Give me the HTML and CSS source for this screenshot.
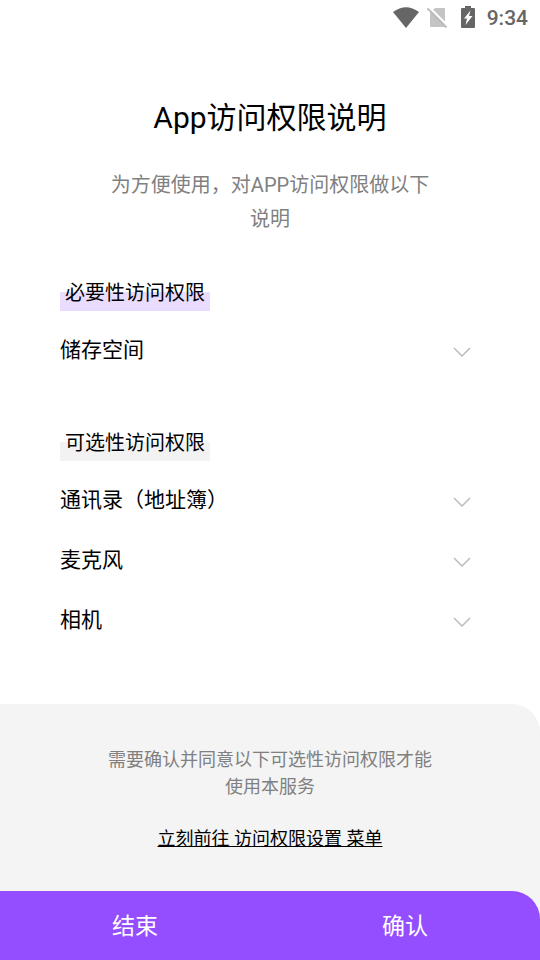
FILE: index.html
```html
<!DOCTYPE html>
<html lang="zh-CN">
<head>
<meta charset="utf-8">
<meta name="viewport" content="width=device-width, initial-scale=1">
<title>App访问权限说明</title>
<link rel="stylesheet" href="styles.css">
</head>
<body>
<div class="status">
  <svg class="wifi" width="26" height="21" viewBox="0 0 26 21" aria-hidden="true"><path d="M0 5Q13-4.500 26 5L13 21z" fill="#666"/></svg>
  <svg class="sim" width="21" height="21" viewBox="0 0 21 21" aria-hidden="true"><path d="M8 1h9q1 0 1 1v17q0 1-1 1H4q-1 0-1-1V6z" fill="#c4c4c4"/><path d="M2 0L22 20" stroke="#fff" stroke-width="2"/><path d="M.5 1.500L19.500 20.500" stroke="#bbb" stroke-width="1.800"/></svg>
  <svg class="battery" width="14" height="22" viewBox="0 0 14 22" aria-hidden="true"><path d="M4 0h6v2h3q1 0 1 1v18q0 1-1 1H1q-1 0-1-1V3q0-1 1-1h3z" fill="#666"/><path d="M9.500 4.500L3 12.500h3L4.500 19 11.500 10H8z" fill="#fff"/></svg>
  <span>9:34</span>
</div>
<main>
  <h1>App访问权限说明</h1>
  <p class="intro">为方便使用，对APP访问权限做以下说明</p>
  <section>
    <h2 class="required">必要性访问权限</h2>
    <button class="row" type="button">储存空间<svg width="18" height="10" viewBox="0 0 18 10" aria-hidden="true"><path d="M1 1l8 8 8-8"/></svg></button>
  </section>
  <section>
    <h2>可选性访问权限</h2>
    <button class="row" type="button">通讯录（地址簿）<svg width="18" height="10" viewBox="0 0 18 10" aria-hidden="true"><path d="M1 1l8 8 8-8"/></svg></button>
    <button class="row" type="button">麦克风<svg width="18" height="10" viewBox="0 0 18 10" aria-hidden="true"><path d="M1 1l8 8 8-8"/></svg></button>
    <button class="row" type="button">相机<svg width="18" height="10" viewBox="0 0 18 10" aria-hidden="true"><path d="M1 1l8 8 8-8"/></svg></button>
  </section>
</main>
<footer>
  <div class="notice">
    <p>需要确认并同意以下可选性访问权限才能使用本服务</p>
    <a href="#settings">立刻前往 访问权限设置 菜单</a>
  </div>
  <div class="actions">
    <button type="button">结束</button>
    <button type="button">确认</button>
  </div>
</footer>
</body>
</html>
```
FILE: styles.css
```css
* {
  box-sizing: border-box;
}

body {
  margin: 0;
  min-height: 100vh;
  display: flex;
  flex-direction: column;
  background: #fff;
  color: #000;
  font-family: Roboto, "Noto Sans CJK SC", sans-serif;
}

h1, h2, p {
  margin: 0;
  font-weight: 400;
}

button {
  border: 0;
  padding: 0;
  background: none;
  color: inherit;
  font-family: inherit;
}

.status {
  display: flex;
  justify-content: flex-end;
  align-items: center;
  height: 36px;
  padding-right: 12px;
  color: #666;
  font-size: 21px;
  font-weight: 500;
}

.status svg {
  margin-bottom: 2px;
}

.status .sim {
  margin-left: 8px;
}

.status .battery {
  margin-right: 12px;
  margin-left: 13px;
}

main {
  padding: 60px 60px 0;
}

h1 {
  font-size: 30px;
  line-height: 44px;
  text-align: center;
}

.intro {
  padding: 28px 45px 0;
  color: #808080;
  font-size: 20px;
  line-height: 34px;
  text-align: center;
}

section {
  padding-top: 43px;
}

section:first-of-type {
  padding-top: 37px;
}

h2 {
  width: fit-content;
  margin-bottom: 9px;
  padding: 2px 5px 0;
  background: linear-gradient(transparent 50%, #f2f2f2 50%);
  font-size: 20px;
  line-height: 36px;
}

.required {
  background: linear-gradient(transparent 50%, #e9dcff 50%);
}

.row {
  display: flex;
  justify-content: space-between;
  align-items: center;
  width: 100%;
  height: 60px;
  padding: 0 9px 4px 0;
  font-size: 21px;
  text-align: left;
}

.row svg {
  margin-top: 8px;
  fill: none;
  stroke: #bbb;
  stroke-width: 1.5;
}

footer {
  margin-top: auto;
  border-top-right-radius: 28px;
  background: #f4f4f4;
}

.notice {
  padding: 42px 100px 39px;
  font-size: 18px;
  line-height: 27px;
  text-align: center;
}

.notice p {
  margin-bottom: 25px;
  color: #808080;
}

.notice a {
  color: #000;
}

.actions {
  display: flex;
  height: 69px;
  border-top-right-radius: 28px;
  background: #944dff;
  color: #fff;
}

.actions button {
  flex: 1;
  padding-bottom: 4px;
  font-size: 23px;
}
```
